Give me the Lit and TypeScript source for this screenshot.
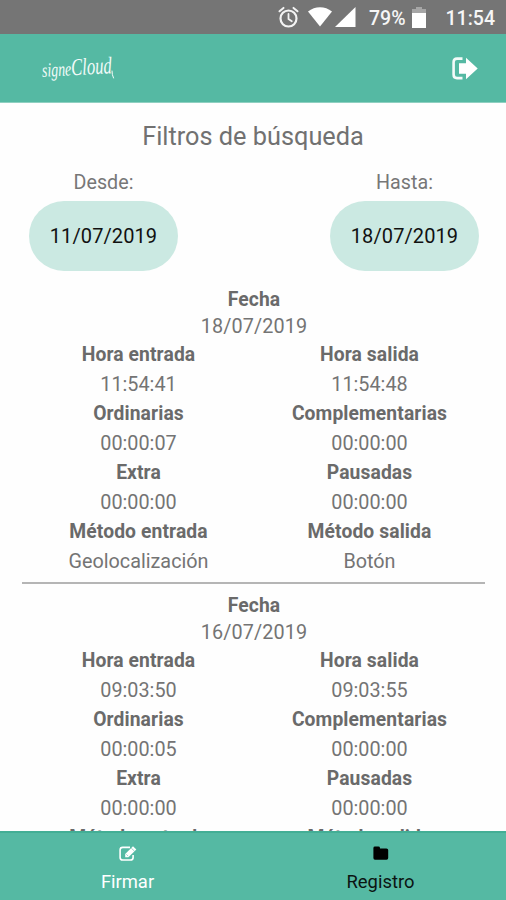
import { LitElement, html, css, svg } from "lit";
import { customElement, property } from "lit/decorators.js";

interface Entry {
  date: string;
  fields: [string, string][];
}

const ENTRIES: Entry[] = [
  {
    date: "18/07/2019",
    fields: [
      ["Hora entrada", "11:54:41"], ["Hora salida", "11:54:48"],
      ["Ordinarias", "00:00:07"], ["Complementarias", "00:00:00"],
      ["Extra", "00:00:00"], ["Pausadas", "00:00:00"],
      ["Método entrada", "Geolocalización"], ["Método salida", "Botón"],
    ],
  },
  {
    date: "16/07/2019",
    fields: [
      ["Hora entrada", "09:03:50"], ["Hora salida", "09:03:55"],
      ["Ordinarias", "00:00:05"], ["Complementarias", "00:00:00"],
      ["Extra", "00:00:00"], ["Pausadas", "00:00:00"],
      ["Método entrada", ""], ["Método salida", ""],
    ],
  },
];

@customElement("status-bar")
class StatusBar extends LitElement {
  static styles = css`
    :host { display: flex; align-items: center; justify-content: flex-end; height: 34px; padding-right: 11px;
      background: #757575; color: #f6f6f6; font: 500 19.5px/34px Roboto, sans-serif; }
    span { padding-top: 3px; }
    svg { display: block; fill: #fff; }
    .alarm { margin-right: 9px; }
    .wifi { margin-right: 3px; }
    .signal { margin-right: 13px; }
    .battery { margin: 0 20px 0 6px; }
  `;
  render() {
    return html`
      <svg class="alarm" width="21" height="22" viewBox="0 0 21 22">
        <g fill="none" stroke="#f3f3f3" stroke-linecap="round">
          <circle cx="10.5" cy="12.5" r="8" stroke-width="2.2"></circle>
          <path d="M10.5 8v5l3.3 2.3" stroke-width="1.8"></path>
          <path d="M1.5 5.3l4-3.4M19.5 5.3l-4-3.4" stroke-width="2"></path>
        </g>
      </svg>
      <svg class="wifi" width="24" height="20" viewBox="0 0 24 20"><path d="M0 4.6C7-1.1 17-1.1 24 4.6L12 19.5z"></path></svg>
      <svg class="signal" width="21" height="20" viewBox="0 0 21 20"><path d="M20.5 0v20H0z"></path></svg>
      <span>79%</span>
      <svg class="battery" width="14" height="21" viewBox="0 0 14 21">
        <path d="M4 0h6v2h4v5H0V2h4z" fill="#a6a6a6"></path><path d="M0 6h14v15H0z"></path>
      </svg>
      <span>11:54</span>`;
  }
}

@customElement("app-header")
class AppHeader extends LitElement {
  static styles = css`
    :host { display: flex; box-sizing: border-box; align-items: center; justify-content: space-between; height: 69px;
      padding: 0 28px 0 42px; background: #55b9a3; border-bottom: 1px solid #8fd0c1; color: #fff; }
    .logo { display: block; overflow: visible; font: italic 18px "Liberation Serif", serif; fill: #f2fbf9; }
    .exit { display: block; }
  `;
  render() {
    return html`
      <svg class="logo" width="72" height="34" viewBox="0 0 72 34">
        <g transform="rotate(-3 36 20)">
          <text x="0" y="24" font-size="20" textLength="70" lengthAdjust="spacingAndGlyphs">signe<tspan font-size="24">Cloud</tspan></text>
        </g>
        <path d="M70 20Q70 24 71.500 27" fill="none" stroke="#f2fbf9" stroke-linecap="round"></path>
      </svg>
      <svg class="exit" width="26" height="23" viewBox="0 0 26 23">
        <path d="M10.500 1.600H5Q1.600 1.600 1.600 5v12.500q0 3.600 3.400 3.600h5.500" fill="none" stroke="#f4fbf9" stroke-width="2.600"></path>
        <path d="M7 6.300H14V.8l11.700 10.700L14 22.200V16.700H7z" fill="#fff"></path>
      </svg>`;
  }
}

@customElement("date-filter")
class DateFilter extends LitElement {
  @property() label = "";
  @property() value = "";
  static styles = css`
    :host { display: flex; flex-direction: column; align-items: center; width: 149px; font-family: Roboto, sans-serif; }
    .label { font-size: 19.7px; line-height: 24px; color: #777; padding-top: 1px; margin-bottom: 6px; }
    .pill { width: 149px; height: 70px; padding: 0; border: 0; border-radius: 35px; background: #cbe9e2;
      font: 20px Roboto, sans-serif; letter-spacing: 0.1px; color: #111; }
  `;
  render() {
    return html`<span class="label">${this.label}</span><button class="pill">${this.value}</button>`;
  }
}

@customElement("time-entry")
class TimeEntry extends LitElement {
  @property({ attribute: false }) entry!: Entry;
  static styles = css`
    :host { display: block; box-sizing: border-box; height: 305px; padding: 10px 0 0 1px; text-align: center;
      font: 19.8px Roboto, sans-serif; color: #747474; }
    .date { display: flex; flex-direction: column; line-height: 26.5px; }
    .date span { letter-spacing: 0.1px; }
    .fields { display: grid; grid-template-columns: 1fr 1fr; }
    .field { display: flex; flex-direction: column; line-height: 29.55px; }
    b { font-weight: 700; font-size: 19.3px; color: #6a6a6a; letter-spacing: 0.1px; }
    .field b { padding-top: 1px; line-height: 28.55px; }
  `;
  render() {
    return html`
      <div class="date"><b>Fecha</b><span>${this.entry.date}</span></div>
      <div class="fields">
        ${this.entry.fields.map(([name, value]) => html`<div class="field"><b>${name}</b><span>${value}</span></div>`)}
      </div>`;
  }
}

@customElement("tab-bar")
class TabBar extends LitElement {
  static styles = css`
    :host { display: grid; grid-template-columns: 1fr 1fr; box-sizing: border-box; height: 69px; flex: none;
      background: #55b9a3; border-top: 2px solid #43ae95; font: 18.4px/24px Roboto, sans-serif; color: #fff; }
    .tab { display: flex; flex-direction: column; align-items: center; padding: 12px 0 0 2px; }
    .active { color: #0b1412; }
    svg { display: block; margin-bottom: 8px; }
  `;
  render() {
    return html`
      <div class="tab">
        ${svg`<svg width="18" height="17" viewBox="0 0 18 17">
          <path d="M11 2.4H3.7Q1.1 2.4 1.1 5v7.4Q1.1 15 3.7 15h7.8q2.6 0 2.6-2.600V10" fill="none" stroke="currentColor" stroke-width="1.6"></path>
          <path d="M6.2 12.2V9L14 1.2l3.3 3.2-7.9 7.8z" fill="currentColor"></path>
          <path d="M12.2 3l3.3 3.2M7.4 9.3l1.8 1.8" stroke="#55b9a3" stroke-width=".6"></path>
        </svg>`}
        <span>Firmar</span>
      </div>
      <div class="tab active">
        ${svg`<svg width="16" height="17" viewBox="0 0 16 17"><path d="M.4 3Q.4 1.600 2 1.600h3.400Q7 1.600 7 3v.6h6.500q1.700 0 1.700 1.500v8q0 1.600-1.700 1.600H2Q.4 14.700.4 13.100z" fill="#000"></path></svg>`}
        <span>Registro</span>
      </div>`;
  }
}

@customElement("app-root")
class AppRoot extends LitElement {
  static styles = css`
    :host { display: flex; flex-direction: column; height: 900px; overflow: hidden; background: #fefefe; font-family: Roboto, sans-serif; }
    status-bar, app-header { flex: none; }
    main { flex: 1; min-height: 0; overflow: hidden; }
    h1 { margin: 18px 0 0; text-align: center; font-size: 25.3px; line-height: 32px; font-weight: 400; color: #717171; }
    .filters { display: flex; justify-content: space-between; padding: 17px 27px 0 29px; }
    .list { margin: 6px 21px 0 22px; }
    time-entry + time-entry { border-top: 2px solid #b5b5b5; padding-top: 9px; }
  `;
  render() {
    return html`
      <status-bar></status-bar>
      <app-header></app-header>
      <main>
        <h1>Filtros de búsqueda</h1>
        <div class="filters">
          <date-filter label="Desde:" value="11/07/2019"></date-filter>
          <date-filter label="Hasta:" value="18/07/2019"></date-filter>
        </div>
        <div class="list">${ENTRIES.map((e) => html`<time-entry .entry=${e}></time-entry>`)}</div>
      </main>
      <tab-bar></tab-bar>`;
  }
}
